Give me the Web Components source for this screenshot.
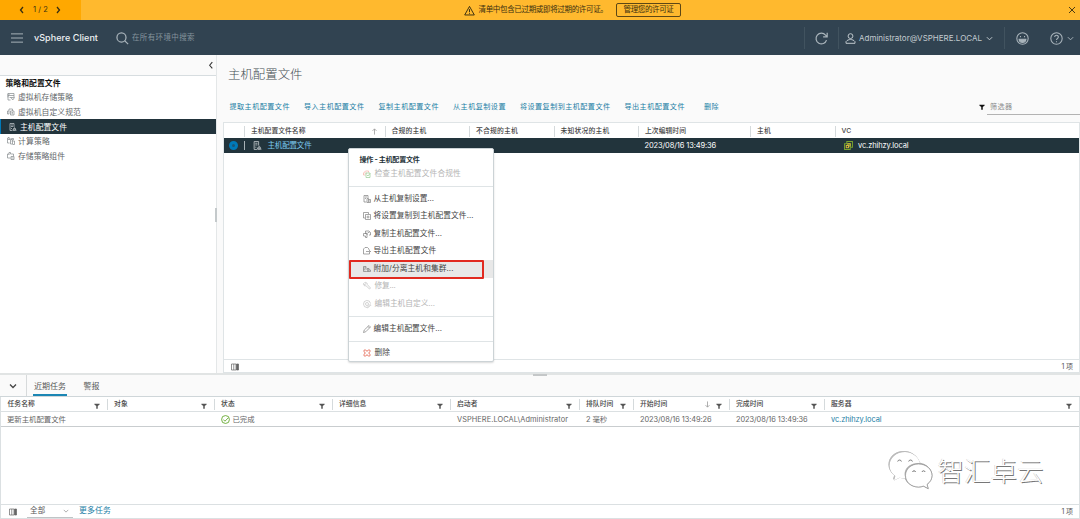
<!DOCTYPE html>
<html lang="zh-CN">
<head>
<meta charset="utf-8">
<title>vSphere Client</title>
<style>
  html, body { margin: 0; height: 100%; overflow: hidden; }
  body {
    font-family: Inter, "Noto Sans CJK SC", sans-serif;
    font-size: 7.5px;
    line-height: 1;
    color: #565656;
    background: #fafafa;
  }
</style>
</head>
<body>
<vsphere-app></vsphere-app>

<script>
const ICONS = {
  left: '<path d="M10 2 5 8l5 6"/>',
  right: '<path d="m6 2 5 6-5 6"/>',
  down: '<path d="m2 5 6 6 6-6"/>',
  close: '<path d="m2 2 12 12M14 2 2 14"/>',
  menu: '<path d="M0 2.5h16M0 8h16M0 13.5h16"/>',
  search: '<circle cx="7" cy="7" r="5.8"/><path d="m11 11 4.5 4.5"/>',
  warn: '<path d="M8 2 1 14.5h14zM8 6v4.5M8 12v1.2"/>',
  refresh: '<path d="M14.2 10A6.6 6.6 0 1 1 13 3.8l1.5 1.7M15 1v5h-5"/>',
  user: '<circle cx="8" cy="4.5" r="3.5"/><path d="M1.5 15v-2.5C3 10.5 5.5 9.5 8 9.5s5 1 6.5 3V15z"/>',
  smile: '<circle cx="8" cy="8" r="7"/><path d="M3.8 9h8.4c-.6 5-7.800 5-8.400 0z" fill="currentColor"/><path d="M5.500 5v1.500M10.500 5v1.500"/>',
  help: '<circle cx="8" cy="8" r="7"/><path d="M5.800 6.200c0-3 4.600-2.800 4.500 0 0 1.800-2.300 1.700-2.300 3.600M8 11.300v1.200"/>',
  filter: '<path d="M1 2h14v2l-5 4v7H6V8L1 4z" fill="currentColor" stroke="none"/>',
  up: '<path d="M8 15V2M3.500 6.500 8 2l4.500 4.500"/>',
  sortdown: '<path d="M8 1v13M3.500 9.500 8 14l4.500-4.500"/>',
  storage: '<path d="M2 9V1h12v7M2 1v13h5M2 5h12M5 3h1M8 9h7l-3.500 5zM5 9h3"/>',
  custom: '<path d="M4 12H1V6h3V2h7v4M7 6h7v8H7zM9 9h3M9 11.500h3M4 6v6"/>',
  profile: '<path d="M2 1h8v7M2 1v14h5M4 4h4M4 7h4M9 11h4v3H8zM8 14.500h7M11 8.500v2M4 11h2"/>',
  compute: '<path d="M1 2h5v3H1zM3 2V0M1 5v7h4M7 5h4v9H7zM11 8h4v7h-4M9 5V3h4v3M8.500 8h1"/>',
  component: '<path d="M1 12V4h3V1h3v3h6v4M1 12h6M8 9h6v6H8zM10 11v2M12 11v2M4 4v2"/>',
  check: '<g stroke="#f2a79c"><path d="M1 6 5 2h6v3M1 6v4h4M3 6h4"/></g><path d="M6 6h8v9H6zM8 10l2 2 4-5" stroke="#8fc98b"/>',
  extract: '<path d="M10 6V1H2v13h5M4 4h4M4 7h2M8 7h3v8H8zM11 9h4v6h-4M13 11v2"/>',
  copyto: '<path d="M4 12H1V1h10v3M5 5h10v10H5zM10 7v6M7 10h6"/>',
  duplicate: '<path d="M5 8V2h7l3 3v5h-3M8 5v5M1 7h7v8H5v-3H1zM10 5h3"/>',
  export: '<path d="M12 6V4L9 1H4L1 4v10h12v-2M6 9h9M12 6l3 3-3 3"/>',
  attach: '<path d="M7 13H1V3h5v4M1 6h5M1 9.500h4M8 7h4v3H8zM7 13h8v-3h-3M10 13v-3"/>',
  wrench: '<path d="M6 7.500 13 14l2-2-6.500-7C9 2 6 0 3.500 1L6 3.500 4 5.500 1 3c-1 3 2 5.500 5 4.500z"/>',
  gear: '<path d="M15 7A7 7 0 1 0 8 15"/><circle cx="8" cy="8" r="3"/><path d="m8 15 6-6 1.500 1.500-6 5z"/>',
  pencil: '<path d="m1 15 1.500-5L12 1l3 3-9.500 9.500zM10 3l3 3"/>',
  delete: '<path d="M2 2h4l2 3 2-3h4v4l-3 2 3 2v4h-4l-2-3-2 3H2v-4l3-2-3-2z"/>',
  columns: '<path d="M1 2h9v12H1zM5.500 2v12"/><path d="M11 2h4v12h-4z" fill="currentColor"/>',
  done: '<circle cx="8" cy="8" r="7"/><path d="m4 8 3 3 6-6"/>',
  vc: '<path d="M5 4V1h10v10h-3M1 5h10v10H1z" stroke="#78a22f"/><path d="M4 8h4v4H4zM7 8V5h4v4H8" stroke="#d3b53a"/>'
};

/* Shared base: fills an open shadow root with styles and markup. */
class BaseElement extends HTMLElement {
  constructor() {
    super();
    this.attachShadow({ mode: "open" });
  }

  render(css, html) {
    this.shadowRoot.innerHTML = `<style>*{box-sizing:border-box}${css}</style>${html}`;
  }
}

class UiIcon extends BaseElement {
  connectedCallback() {
    const size = this.getAttribute("size") || 9;
    const weight = this.getAttribute("weight") || 1.4;
    this.render(`
      :host { display: block; flex: none; width: ${size}px; height: ${size}px; }
      svg { display: block; width: 100%; height: 100%; overflow: visible; }
    `, `<svg viewBox="0 0 16 16" fill="none" stroke="currentColor" stroke-width="${weight}">${ICONS[this.getAttribute("name")]}</svg>`);
  }
}

/* Text on one line, tracked so that it runs to the width in "w". */
class FitText extends BaseElement {
  connectedCallback() {
    this.render(`
      :host { display: block; flex: none; white-space: pre; line-height: 1.3; }
      span { display: inline-block; }
    `, `<span><slot></slot></span>`);
    const w = parseFloat(this.getAttribute("w"));
    if (!w) return;
    const span = this.shadowRoot.querySelector("span");
    const natural = span.getBoundingClientRect().width;
    span.style.letterSpacing = (w - natural) / this.textContent.length + "px";
    this.style.width = w + "px";
  }
}

class LicenseBanner extends BaseElement {
  connectedCallback() {
    this.render(`
      :host { display: flex; height: 20px; background: #ffb92e; color: #3a2f10; }
      .pager { width: 81px; background: #ffa800; display: flex; align-items: center; padding-left: 18px; gap: 6px; }
      .pager fit-text { margin-left: 1px; }
      .msg { flex: 1; display: flex; align-items: center; padding-left: 382.500px; }
      .msg > fit-text { margin-left: 4px; }
      button { font: inherit; color: inherit; background: none; border: 1px solid #5d4715; border-radius: 2px; height: 14px; margin: 0 0 0 8.500px; padding: 0 6.500px; width: 65px; }
      .close { margin: 0 4.500px 0 auto; }
    `, `
      <div class="pager">
        <ui-icon name="left" size="8" weight="2.6"></ui-icon>
        <fit-text w="15">1 / 2</fit-text>
        <ui-icon name="right" size="8" weight="2.6"></ui-icon>
      </div>
      <div class="msg">
        <ui-icon name="warn" size="11"></ui-icon>
        <fit-text w="129">清单中包含已过期或即将过期的许可证。</fit-text>
        <button><fit-text w="50">管理您的许可证</fit-text></button>
        <ui-icon class="close" name="close" size="8" weight="1.800"></ui-icon>
      </div>
    `);
  }
}

class AppHeader extends BaseElement {
  connectedCallback() {
    this.render(`
      :host { display: flex; align-items: center; height: 35px; background: #314351; color: #a9b4bb; padding: 1px 0 0 11px; box-sizing: border-box; }
      .brand { font-size: 9px; font-weight: 500; color: #eef1f3; margin: 0 17.500px 0 11px; }
      .find { color: #84939c; margin-left: 4px; }
      .grow { flex: 1; }
      .sep { width: 1px; height: 22px; background: #41535f; }
      .user { display: flex; align-items: center; width: 165px; padding-left: 5.500px; color: #c3cbd0; }
      .user fit-text { margin: 0 4px 0 3.500px; font-size: 8px; }
      .refresh { width: 33px; display: flex; justify-content: center; }
      .tools { width: 75px; display: flex; align-items: center; padding-left: 10.500px; }
      .tools .help { margin: 0 4px 0 21px; }
    `, `
      <ui-icon name="menu" size="12" weight="1.3"></ui-icon>
      <fit-text class="brand" w="64">vSphere Client</fit-text>
      <ui-icon name="search" size="12.500" weight="1.600"></ui-icon>
      <fit-text class="find" w="63">在所有环境中搜索</fit-text>
      <div class="grow"></div>
      <div class="sep"></div>
      <div class="refresh"><ui-icon name="refresh" size="13" weight="1.500"></ui-icon></div>
      <div class="sep"></div>
      <div class="user">
        <ui-icon name="user" size="11"></ui-icon>
        <fit-text w="123">Administrator@VSPHERE.LOCAL</fit-text>
        <ui-icon name="down" size="7" weight="2.2"></ui-icon>
      </div>
      <div class="sep"></div>
      <div class="tools">
        <ui-icon name="smile" size="13" weight="1.3"></ui-icon>
        <ui-icon class="help" name="help" size="13" weight="1.3"></ui-icon>
        <ui-icon name="down" size="7" weight="2.2"></ui-icon>
      </div>
    `);
  }
}

class NavItem extends BaseElement {
  connectedCallback() {
    this.render(`
      :host { display: flex; align-items: center; height: 14.600px; padding-left: 7px; color: #5f6669; }
      :host([active]) { background: #22343c; color: #fff; border-left: 1.500px solid #0079b8; padding-left: 8px; height: 15px; }
      ui-icon { color: #84898c; margin-right: 3px; }
      :host([active]) ui-icon { color: #c9d0d3; }
    `, `
      <ui-icon name="${this.getAttribute("icon")}" size="8"></ui-icon>
      <fit-text w="${this.getAttribute("w")}">${this.getAttribute("label")}</fit-text>
    `);
  }
}

class SideNav extends BaseElement {
  connectedCallback() {
    this.render(`
      :host { display: block; width: 216px; background: #fff; font-size: 7.800px; position: relative; }
      .top { height: 21px; background: #fafafa; border-bottom: 1px solid #d7dde0; display: flex; justify-content: flex-end; align-items: center; padding-right: .5px; color: #333; }
      h3 { font-size: 7.800px; font-weight: 700; color: #111; margin: 0; height: 14px; display: flex; align-items: center; padding-left: 5.500px; }
      .grip { position: absolute; right: -1px; top: 153px; width: 2px; height: 14px; background: #c4c9cb; }
    `, `
      <div class="top"><ui-icon name="left" size="8.500" weight="2"></ui-icon></div>
      <h3><fit-text w="55">策略和配置文件</fit-text></h3>
      <nav-item icon="storage" label="虚拟机存储策略" w="55"></nav-item>
      <nav-item icon="custom" label="虚拟机自定义规范" w="63"></nav-item>
      <nav-item icon="profile" label="主机配置文件" w="47" active></nav-item>
      <nav-item icon="compute" label="计算策略" w="32"></nav-item>
      <nav-item icon="component" label="存储策略组件" w="47"></nav-item>
      <div class="grip"></div>
    `);
  }
}

/* Grid heading cell: divider on the left, optional sort arrow and filter on the right. */
class HeadCell extends BaseElement {
  connectedCallback() {
    const sort = this.getAttribute("sort");
    this.render(`
      :host { display: flex; align-items: center; height: 11px; border-left: 1px solid #d5dadc; padding: 0 7px 0 6px; font-size: 6.800px; font-weight: 500; color: #454545; min-width: 0; }
      :host([first]) { border-color: transparent; padding-left: 5.500px; }
      .grow { flex: 1; }
      .sort { color: #999; margin-right: ${this.hasAttribute("filter") ? 5 : 0}px; }
      .filter { color: #555; margin-top: 2px; }
    `, `
      <fit-text w="${this.getAttribute("w")}">${this.getAttribute("label")}</fit-text>
      <div class="grow"></div>
      ${sort ? `<ui-icon class="sort" name="${sort}" size="7" weight="1.800"></ui-icon>` : ""}
      ${this.hasAttribute("filter") ? `<ui-icon class="filter" name="filter" size="6"></ui-icon>` : ""}
    `);
  }
}

class ProfileView extends BaseElement {
  connectedCallback() {
    const actions = [
      ["提取主机配置文件", 60.5], ["导入主机配置文件", 60.5], ["复制主机配置文件", 60.5],
      ["从主机复制设置", 53], ["将设置复制到主机配置文件", 90.5], ["导出主机配置文件", 60.5]
    ];
    this.render(`
      :host { display: flex; flex-direction: column; flex: 1; min-width: 0; border-left: 1px solid #e4e7e8; padding-left: 6px; }
      h1 { margin: 0; font-size: 12.400px; font-weight: 300; color: #454f54; height: 38px; padding: 2px 0 0 5px; display: flex; align-items: center; }
      .bar { height: 29px; display: flex; align-items: center; padding: 0 0 2px 6.500px; gap: 14px; font-size: 7.100px; color: #1b7ea5; }
      .bar .last { margin-left: 5px; }
      .filter { display: flex; align-items: center; margin-left: auto; color: #111; height: 16px; }
      .input { width: 93px; margin-left: 2px; padding: 1px 0 0 3px; border-bottom: 1px solid #b3b3b3; color: #8c8c8c; height: 16px; display: flex; align-items: center; }
      .grid { flex: 1; background: #fff; border: 1px solid #dfe4e6; display: flex; flex-direction: column; }
      .row { display: grid; grid-template-columns: 20.500px 140.500px 84.500px 84.500px 84.500px 112px 84.500px 1fr; align-items: center; margin-left: -.5px; }
      .head { height: 15px; padding-top: 1px; }
      .sel { height: 15px; background: #22343c; color: #fff; }
      .radio { width: 9px; height: 9px; border-radius: 50%; border: 3.200px solid #0079b8; background: #17577b; margin-left: 5.500px; }
      .name { grid-column: 2; border-left: 1px solid #a8b2b6; height: 9px; display: flex; align-items: center; padding-left: 8px; color: #7cc9ee; }
      .name ui-icon { color: #c9d0d3; margin-right: 5.500px; }
      .date { grid-column: 6; padding-left: 6.500px; }
      .vc { grid-column: 8; display: flex; align-items: center; padding-left: 9px; gap: 5.500px; }
      .foot { margin-top: auto; height: 13px; border-top: 1px solid #dfe4e6; display: flex; align-items: center; justify-content: space-between; padding: 1px 6px 0 7px; font-size: 7px; }
      .foot ui-icon { color: #666; }
    `, `
      <h1><fit-text w="74.500">主机配置文件</fit-text></h1>
      <div class="bar">
        ${actions.map(([t, w]) => `<fit-text w="${w}">${t}</fit-text>`).join("")}
        <fit-text class="last" w="15">删除</fit-text>
        <div class="filter">
          <ui-icon name="filter" size="6"></ui-icon>
          <div class="input"><fit-text w="22.500">筛选器</fit-text></div>
        </div>
      </div>
      <div class="grid">
        <div class="row head">
          <span></span>
          <head-cell label="主机配置文件名称" w="54.500" sort="up"></head-cell>
          <head-cell label="合规的主机" w="35"></head-cell>
          <head-cell label="不合规的主机" w="42"></head-cell>
          <head-cell label="未知状况的主机" w="49"></head-cell>
          <head-cell label="上次编辑时间" w="41"></head-cell>
          <head-cell label="主机" w="14"></head-cell>
          <head-cell label="VC" w="10"></head-cell>
        </div>
        <div class="row sel">
          <div class="radio"></div>
          <div class="name"><ui-icon name="profile" size="9"></ui-icon><fit-text w="44">主机配置文件</fit-text></div>
          <div class="date"><fit-text w="71.500">2023/08/16 13:49:36</fit-text></div>
          <div class="vc"><ui-icon name="vc" size="9" weight="1.800"></ui-icon><fit-text w="50.500">vc.zhihzy.local</fit-text></div>
        </div>
        <div class="foot">
          <ui-icon name="columns" size="8"></ui-icon>
          <fit-text w="11.500">1 项</fit-text>
        </div>
      </div>
    `);
  }
}

class MenuItem extends BaseElement {
  connectedCallback() {
    this.render(`
      :host { display: flex; align-items: center; height: 17.500px; padding-left: 13.500px; gap: 3px; font-size: 7.700px; color: #454545; }
      :host([disabled]) { color: #b5b5b5; }
      :host([hover]) { background: #e8e8e8; }
      ui-icon { color: #777; }
      :host([disabled]) ui-icon { color: #bbb; margin-right: 1px; }
      :host([danger]) ui-icon { color: #e2553f; margin-right: 1px; }
    `, `
      <ui-icon name="${this.getAttribute("icon")}" size="8" weight="1.3"></ui-icon>
      <fit-text w="${this.getAttribute("w")}">${this.getAttribute("label")}</fit-text>
    `);
  }
}

class ContextMenu extends BaseElement {
  connectedCallback() {
    this.render(`
      :host { display: block; position: absolute; left: 348px; top: 148px; width: 146px; height: 214px; background: #fff; border: 1px solid #ccd3d6; border-radius: 2px; box-shadow: 0 1px 2px rgba(0,0,0,.15); box-sizing: border-box; padding-top: 6px; }
      .title { font-size: 7.100px; font-weight: 700; color: #253239; padding-left: 10.500px; height: 10px; display: flex; align-items: center; }
      hr { border: 0; border-top: 1px solid #dfe4e6; margin: 3px 0; }
      hr.wide { margin: 3.500px 0 3px; }
      .mark { position: absolute; left: 0; top: 111px; width: 135px; height: 19px; border: 2px solid #e12a20; border-radius: 1px; }
    `, `
      <div class="title"><fit-text w="60">操作 - 主机配置文件</fit-text></div>
      <menu-item icon="check" label="检查主机配置文件合规性" w="86.500" disabled></menu-item>
      <hr class="wide">
      <menu-item icon="extract" label="从主机复制设置..." w="60.500"></menu-item>
      <menu-item icon="copyto" label="将设置复制到主机配置文件..." w="100"></menu-item>
      <menu-item icon="duplicate" label="复制主机配置文件..." w="68.500"></menu-item>
      <menu-item icon="export" label="导出主机配置文件" w="63"></menu-item>
      <menu-item icon="attach" label="附加/分离主机和集群..." w="80" hover></menu-item>
      <menu-item icon="wrench" label="修复..." w="21" disabled></menu-item>
      <menu-item icon="gear" label="编辑主机自定义..." w="60.500" disabled></menu-item>
      <hr class="wide">
      <menu-item icon="pencil" label="编辑主机配置文件..." w="68.500"></menu-item>
      <hr>
      <menu-item icon="delete" label="删除" w="15.500" danger></menu-item>
      <div class="mark"></div>
    `);
  }
}

class TaskPanel extends BaseElement {
  connectedCallback() {
    this.render(`
      :host { display: flex; flex-direction: column; height: 146px; border-top: 2px solid #e1e4e4; box-sizing: border-box; }
      .handle { width: 14px; height: 2px; background: #c4c7c8; margin: -1px 0 -1px 533px; }
      .tabs { height: 22px; display: flex; align-items: stretch; border-bottom: 1px solid #cfd6d9; font-size: 8px; }
      .toggle { width: 27px; border-right: 1px solid #d7dadb; display: flex; align-items: center; justify-content: center; color: #444; }
      .tab { display: flex; align-items: center; padding: 2px 1px 0; margin: 0 15.500px 0 6px; border-top: 2px solid transparent; border-bottom: 2px solid transparent; }
      .tab.on { border-bottom-color: #1b86b4; }
      .tab + .tab { margin-left: 0; }
      .body { flex: 1; background: #fff; border: 1px solid #dbe0e2; border-top: 0; display: flex; flex-direction: column; }
      .row { display: grid; grid-template-columns: 106px 107px 118px 118px 129px 54px 96px 95px 1fr; align-items: center; height: 15px; border-bottom: 1px solid #dbe0e2; padding-top: 1px; }
      .vals { border-bottom-color: #c9cdcf; font-size: 7.400px; color: #666; }
      .vals > * { padding-left: 7px; }
      .vals > :first-child { padding-left: 6px; }
      .state { display: flex; align-items: center; gap: 2.500px; }
      .state ui-icon { color: #5aa220; }
      .link { color: #1b7ea5; }
      .foot { margin-top: auto; height: 14px; border-top: 1px solid #dbe0e2; display: flex; align-items: center; padding: 0 6px 0 7.500px; }
      .foot ui-icon { color: #666; }
      .pick { width: 46px; height: 14px; border-bottom: 1px solid #c0c4c6; margin: -1px 6.500px 0 10px; padding: 0 3.500px; display: flex; justify-content: space-between; align-items: center; }
      .more { margin-top: -3px; font-size: 7.900px; }
      .count { margin-left: auto; font-size: 7px; }
    `, `
      <div class="handle"></div>
      <div class="tabs">
        <div class="toggle"><ui-icon name="down" size="8" weight="2.600"></ui-icon></div>
        <div class="tab on"><fit-text w="32">近期任务</fit-text></div>
        <div class="tab"><fit-text w="16">警报</fit-text></div>
      </div>
      <div class="body">
        <div class="row">
          <head-cell label="任务名称" w="27.500" first filter></head-cell>
          <head-cell label="对象" w="14" filter></head-cell>
          <head-cell label="状态" w="14" filter></head-cell>
          <head-cell label="详细信息" w="27.500" filter></head-cell>
          <head-cell label="启动者" w="20.500" filter></head-cell>
          <head-cell label="排队时间" w="27.500" filter></head-cell>
          <head-cell label="开始时间" w="27.500" sort="sortdown" filter></head-cell>
          <head-cell label="完成时间" w="27.500" filter></head-cell>
          <head-cell label="服务器" w="20.500" filter></head-cell>
        </div>
        <div class="row vals">
          <div><fit-text w="59">更新主机配置文件</fit-text></div>
          <div></div>
          <div class="state"><ui-icon name="done" size="9" weight="1.500"></ui-icon><fit-text w="22">已完成</fit-text></div>
          <div></div>
          <div><fit-text w="111">VSPHERE.LOCAL\\Administrator</fit-text></div>
          <div><fit-text w="21">2 毫秒</fit-text></div>
          <div><fit-text w="71.500">2023/08/16 13:49:26</fit-text></div>
          <div><fit-text w="71.500">2023/08/16 13:49:36</fit-text></div>
          <div class="link"><fit-text w="50.500">vc.zhihzy.local</fit-text></div>
        </div>
        <div class="foot">
          <ui-icon name="columns" size="8"></ui-icon>
          <div class="pick"><fit-text w="15.500">全部</fit-text><ui-icon name="down" size="6"></ui-icon></div>
          <fit-text class="link more" w="32">更多任务</fit-text>
          <fit-text class="count" w="11.500">1 项</fit-text>
        </div>
      </div>
    `);
  }
}

/* Embossed white signature laid over the lower right corner. */
class ChannelMark extends BaseElement {
  connectedCallback() {
    this.render(`
      :host { position: absolute; left: 888px; top: 450px; display: flex; align-items: center; gap: 4.500px; color: #fff; font-size: 26.500px; font-weight: 300; pointer-events: none; }
      svg { width: 45px; height: 42px; filter: drop-shadow(.6px .6px .3px #888) drop-shadow(-.2px -.2px .2px #bbb); }
      fit-text { text-shadow: 1px 1px .6px #777, -.4px -.4px .6px #ccc; }
    `, `
      <svg viewBox="0 0 45 42">
        <path fill="#fff" d="M17 2C8 2 1.500 8 1.500 15.500c0 4.500 2.200 8 5.800 10.500L6 30.500l5.500-2.800c2 .6 4 .8 6 .7C14 18 23 12.500 32 13 30 6 24 2 17 2z"/>
        <path fill="#fff" stroke="#999" stroke-width=".7" d="M30.500 14C23 14 17.500 19 17.500 25.500S23 37 30.500 37c1.800 0 3.500-.3 5-.9l4.700 2.500-1.200-4.200c3-2.200 5-5.200 5-8.900C44 19 38 14 30.500 14z"/>
        <g fill="none" stroke="#777" stroke-width="1"><path d="M9.700 11.500a1.900 1.900 0 0 1 3.700 0M20.700 11.500a1.900 1.900 0 0 1 3.700 0M24.500 22a1.600 1.600 0 0 1 3.100 0M34 22a1.600 1.600 0 0 1 3.100 0"/></g>
      </svg>
      <fit-text w="106">智汇卓云</fit-text>
    `);
  }
}

class VsphereApp extends BaseElement {
  connectedCallback() {
    this.render(`
      :host { display: flex; flex-direction: column; height: 519px; position: relative; }
      .main { flex: 1; display: flex; min-height: 0; position: relative; }
    `, `
      <license-banner></license-banner>
      <app-header></app-header>
      <div class="main">
        <side-nav></side-nav>
        <profile-view></profile-view>
      </div>
      <task-panel></task-panel>
      <context-menu></context-menu>
      <channel-mark></channel-mark>
    `);
  }
}

customElements.define("vsphere-app", VsphereApp);
customElements.define("license-banner", LicenseBanner);
customElements.define("app-header", AppHeader);
customElements.define("side-nav", SideNav);
customElements.define("nav-item", NavItem);
customElements.define("profile-view", ProfileView);
customElements.define("head-cell", HeadCell);
customElements.define("task-panel", TaskPanel);
customElements.define("context-menu", ContextMenu);
customElements.define("menu-item", MenuItem);
customElements.define("channel-mark", ChannelMark);
customElements.define("ui-icon", UiIcon);
customElements.define("fit-text", FitText);
</script>
</body>
</html>
